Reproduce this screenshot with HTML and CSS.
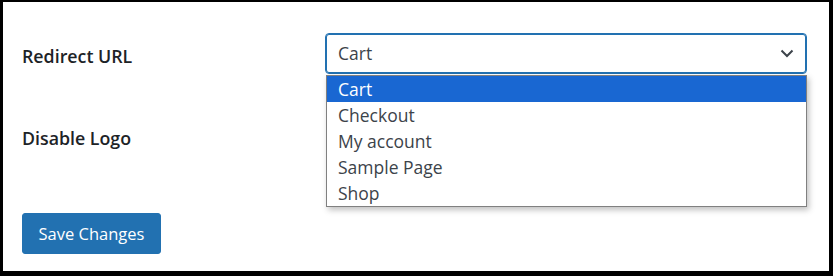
FILE: index.html
```html
<!DOCTYPE html>
<html>
<head>
<meta charset="utf-8">
<link rel="stylesheet" href="styles.css">
</head>
<body>
<div class="frame">
  <div class="form">
    <div class="row row-redirect">
      <div class="label">Redirect URL</div>
      <div class="field">
        <div class="select">
          <span class="select-value">Cart</span>
          <svg class="chevron" width="14" height="9" viewBox="0 0 14 9"><path d="M1.5 1.5 L7 7 L12.5 1.5" fill="none" stroke="#3c434a" stroke-width="2"/></svg>
        </div>
        <ul class="options">
          <li class="option selected">Cart</li>
          <li class="option">Checkout</li>
          <li class="option">My account</li>
          <li class="option">Sample Page</li>
          <li class="option">Shop</li>
        </ul>
      </div>
    </div>
    <div class="row row-logo">
      <div class="label">Disable Logo</div>
    </div>
    <div class="actions">
      <button class="btn">Save Changes</button>
    </div>
  </div>
</div>
</body>
</html>
```
FILE: styles.css
```css
html, body {
  margin: 0;
  padding: 0;
  background: #000;
}
.frame {
  width: 826px;
  height: 269px;
  margin: 2px 4px 5px 3px;
  background: #fff;
  box-sizing: border-box;
  font-family: "Segoe UI", "Open Sans", "Noto Sans", sans-serif;
  overflow: hidden;
}
.form {
  padding: 31px 0 0 19px;
  display: flex;
  flex-direction: column;
}
.row {
  display: flex;
  position: relative;
}
.row-redirect {
  height: 40px;
  align-items: center;
}
.label {
  width: 303px;
  font-size: 17.8px;
  font-weight: 600;
  color: #1d2327;
  padding-top: 5px;
}
.field {
  position: relative;
}
.select {
  width: 482px;
  height: 41px;
  box-sizing: border-box;
  border: 1px solid #2271b1;
  border-radius: 4px;
  display: flex;
  align-items: center;
  justify-content: space-between;
  padding: 0 12px 0 12px;
  font-size: 17.5px;
  color: #3c434a;
  box-shadow: 0 0 0 1px #2271b1 inset;
}
.chevron {
  display: block;
}
.options {
  position: absolute;
  left: 1px;
  top: 42px;
  width: 481px;
  margin: 0;
  padding: 0;
  list-style: none;
  background: #fff;
  border: 1px solid #808080;
  box-sizing: border-box;
  box-shadow: 2px 3px 6px rgba(0,0,0,0.25);
  z-index: 2;
}
.option {
  height: 26.2px;
  line-height: 26px;
  padding-left: 11px;
  font-size: 17.5px;
  color: #3c434a;
}
.option.selected {
  background: #1967d2;
  color: #fff;
}
.row-logo {
  height: 40px;
  margin-top: 42px;
  align-items: center;
}
.actions {
  margin-top: 58px;
}
.btn {
  height: 41px;
  padding: 0 15.5px;
  background: #2271b1;
  color: #fff;
  border: 1px solid #2271b1;
  border-radius: 3px;
  font-family: "Segoe UI", "Open Sans", "Noto Sans", sans-serif;
  font-size: 16.5px;
}
```
